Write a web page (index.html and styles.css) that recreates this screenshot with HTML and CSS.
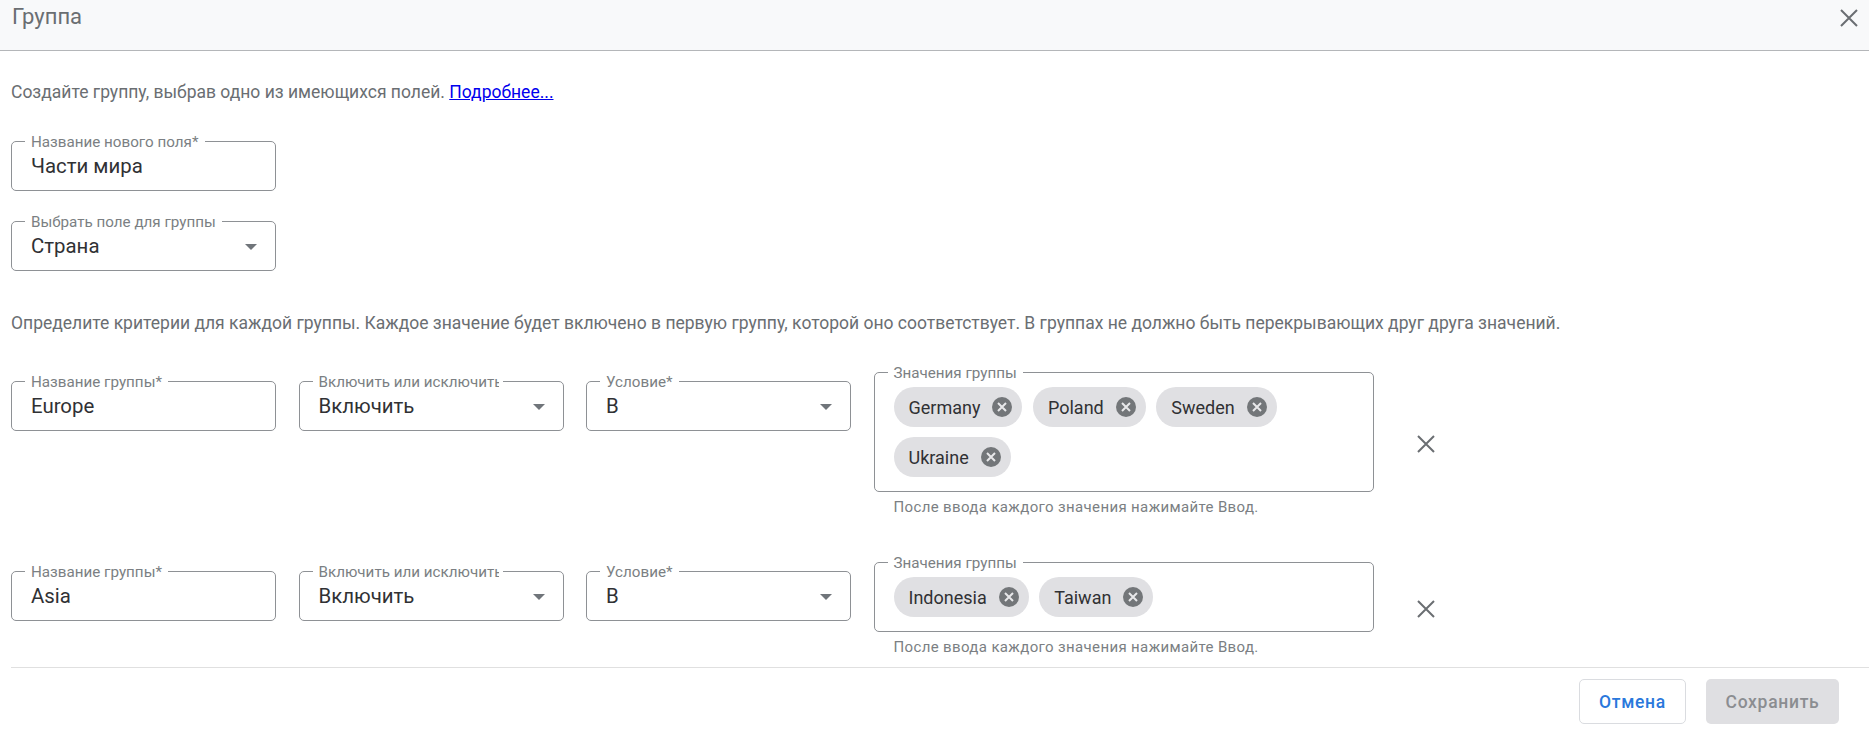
FILE: index.html
```html
<!DOCTYPE html>
<html lang="ru">
<head>
<meta charset="utf-8">
<title>Группа</title>
<link rel="stylesheet" href="styles.css">
</head>
<body>
<div class="dialog">
  <header class="head">
    <span class="title">Группа</span>
    <svg class="ico close" viewBox="0 0 24 24"><path d="M4 4L20 20M20 4L4 20"/></svg>
  </header>
  <main class="content">
    <p class="intro">Создайте группу, выбрав одно из имеющихся полей. <a href="#">Подробнее...</a></p>
    <div class="field f-top"><span class="lab">Название нового поля*</span><span class="val">Части мира</span></div>
    <div class="field f-top2"><span class="lab">Выбрать поле для группы</span><span class="val">Страна</span><i class="caret"></i></div>
    <p class="intro crit">Определите критерии для каждой группы. Каждое значение будет включено в первую группу, которой оно соответствует. В группах не должно быть перекрывающих друг друга значений.</p>

    <div class="row row1">
      <div class="field"><span class="lab">Название группы*</span><span class="val">Europe</span></div>
      <div class="field"><span class="lab clip">Включить или исключить</span><span class="val">Включить</span><i class="caret"></i></div>
      <div class="field"><span class="lab">Условие*</span><span class="val">В</span><i class="caret"></i></div>
      <div class="vals">
        <div class="box">
          <span class="lab">Значения группы</span>
          <span class="chip">Germany<svg class="cx" viewBox="0 0 20 20"><circle cx="10" cy="10" r="10"/><path d="M6 6L14 14M14 6L6 14"/></svg></span>
          <span class="chip">Poland<svg class="cx" viewBox="0 0 20 20"><circle cx="10" cy="10" r="10"/><path d="M6 6L14 14M14 6L6 14"/></svg></span>
          <span class="chip">Sweden<svg class="cx" viewBox="0 0 20 20"><circle cx="10" cy="10" r="10"/><path d="M6 6L14 14M14 6L6 14"/></svg></span>
          <span class="chip">Ukraine<svg class="cx" viewBox="0 0 20 20"><circle cx="10" cy="10" r="10"/><path d="M6 6L14 14M14 6L6 14"/></svg></span>
        </div>
        <div class="hint">После ввода каждого значения нажимайте Ввод.</div>
      </div>
      <svg class="ico del" viewBox="0 0 24 24"><path d="M4 4L20 20M20 4L4 20"/></svg>
    </div>

    <div class="row row2">
      <div class="field"><span class="lab">Название группы*</span><span class="val">Asia</span></div>
      <div class="field"><span class="lab clip">Включить или исключить</span><span class="val">Включить</span><i class="caret"></i></div>
      <div class="field"><span class="lab">Условие*</span><span class="val">В</span><i class="caret"></i></div>
      <div class="vals">
        <div class="box">
          <span class="lab">Значения группы</span>
          <span class="chip">Indonesia<svg class="cx" viewBox="0 0 20 20"><circle cx="10" cy="10" r="10"/><path d="M6 6L14 14M14 6L6 14"/></svg></span>
          <span class="chip">Taiwan<svg class="cx" viewBox="0 0 20 20"><circle cx="10" cy="10" r="10"/><path d="M6 6L14 14M14 6L6 14"/></svg></span>
        </div>
        <div class="hint">После ввода каждого значения нажимайте Ввод.</div>
      </div>
      <svg class="ico del" viewBox="0 0 24 24"><path d="M4 4L20 20M20 4L4 20"/></svg>
    </div>
  </main>
  <footer class="foot">
    <button class="btn cancel">Отмена</button>
    <button class="btn save">Сохранить</button>
  </footer>
</div>
</body>
</html>
```

FILE: styles.css
```css
* { box-sizing: border-box; }
html, body { margin: 0; height: 734px; overflow: hidden; background: #fff; }
body { font-family: Roboto, "Noto Sans", sans-serif; color: #6a6e72; }
.dialog { display: flex; flex-direction: column; height: 734px; }
.head { height: 51px; background: #f8f9fa; border-bottom: 1px solid #b4b6b9; display: flex; align-items: flex-start; justify-content: space-between; padding: 6px 8px 0 12px; flex: none; }
.title { font-size: 22px; line-height: 26px; margin-top: -2px; color: #6a6e72; }
.ico path { fill: none; stroke: #6a6e72; stroke-width: 2; }
.close { width: 24px; height: 24px; }
.content { flex: 1; padding: 0 11px; }
.intro { margin: 31px 0 0; font-size: 17.5px; line-height: 20px; }
.intro a { color: #0000ee; text-decoration: underline; }
.crit { margin-top: 42px; }
.field { position: relative; width: 265px; height: 50px; border: 1px solid #8e9195; border-radius: 5px; display: flex; align-items: center; padding: 0 19px; flex: none; background: #fff; }
.f-top { margin-top: 39px; }
.f-top2 { margin-top: 30px; }
.lab { position: absolute; left: 13px; top: -8px; padding: 0 6px; background: #fff; font-size: 15.2px; line-height: 16px; color: #7b7f83; white-space: nowrap; }
.clip { width: 190px; padding-right: 0; border-right: 4px solid #fff; overflow: hidden; }
.val { font-size: 20.4px; color: #303134; }
.caret { position: absolute; right: 18px; top: 22px; width: 0; height: 0; border-left: 6.5px solid transparent; border-right: 6.5px solid transparent; border-top: 6.5px solid #70757a; }
.row { display: flex; align-items: flex-start; gap: 22.5px; position: relative; }
.row1 { margin-top: 39px; }
.row2 { margin-top: 47px; }
.row .field { margin-top: 9px; }
.vals { width: 500px; flex: none; }
.box { position: relative; border: 1px solid #8e9195; border-radius: 5px; padding: 14px 19px; display: flex; flex-wrap: wrap; gap: 10px 10.5px; }
.chip { height: 40px; border-radius: 20px; background: #e0e0e3; color: #303134; font-size: 18px; display: inline-flex; align-items: center; padding: 0 10px 0 15px; }
.cx { width: 20px; height: 20px; margin-left: 12px; }
.cx circle { fill: #737679; }
.cx path { stroke: #e8e8ea; stroke-width: 2; fill: none; }
.hint { margin: 7px 0 0 20px; font-size: 15px; line-height: 16px; letter-spacing: .36px; color: #7b7f83; }
.del { width: 24px; height: 24px; flex: none; margin: 60px 0 0 18px; }
.row2 .del { margin-top: 35px; }
.foot { flex: none; height: 67px; margin: 0 0 0 11px; border-top: 1px solid #e0e0e0; display: flex; justify-content: flex-end; align-items: flex-start; padding: 11px 30px 0 0; gap: 20px; }
.btn { height: 45px; border-radius: 5px; font: 500 17.5px Roboto, sans-serif; letter-spacing: .7px; }
.cancel { width: 107px; background: #fff; border: 1px solid #dadce0; color: #2a78dc; }
.save { width: 133px; background: #dfdfe2; border: 0; color: #8b8d91; }
```
